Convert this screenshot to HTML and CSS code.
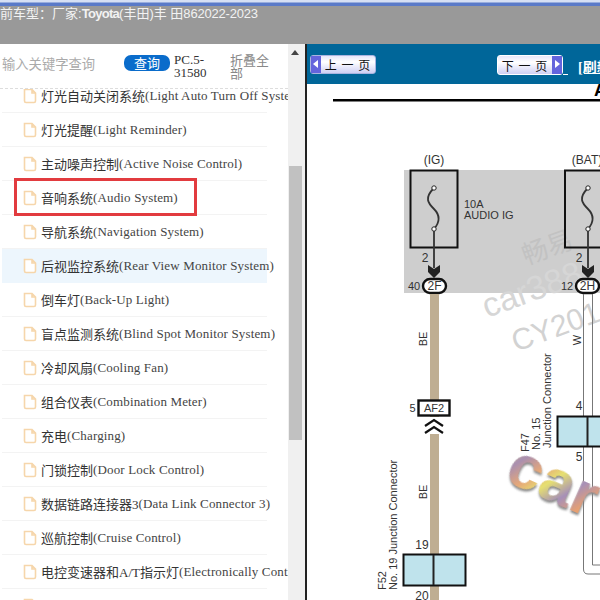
FILE: index.html
```html
<!DOCTYPE html>
<html lang="en">
<head>
    <meta charset="UTF-8">
    <title>Wiring Diagram</title>
    <link rel="stylesheet" href="styles.css">
</head>
<body>
    <svg class="defs" width="0" height="0">
        <symbol id="doc" viewBox="0 0 14 16">
            <path d="M1.5 1.5 H9 L12.5 5 V13 Q12.5 14.5 11 14.5 H3 Q1.5 14.5 1.5 13 Z M9 1.5 V5 H12.5" fill="#fff" stroke="#f6d6ab" stroke-width="1.6"/>
        </symbol>
        <linearGradient id="rainbow" x1="0" y1="0" x2="1" y2="0.5">
            <stop offset="0" stop-color="#e8d860"/>
            <stop offset="0.25" stop-color="#a98fb0"/>
            <stop offset="0.45" stop-color="#e6a878"/>
            <stop offset="0.6" stop-color="#e6e070"/>
            <stop offset="0.8" stop-color="#a690b8"/>
            <stop offset="1" stop-color="#e8a070"/>
        </linearGradient>
    </svg>

    <div class="stripe"></div>
    <div class="topbar">前车型：厂家:<b>Toyota</b>(丰田)丰 田<span class="years">862022-2023</span></div>

    <div class="main">
        <div class="sidebar">
            <div class="search">
                <span class="placeholder">输入关键字查询</span>
                <span class="query-btn">查询</span>
                <span class="pc-code">PC.5-31580</span>
                <span class="fold-all">折叠全部</span>
            </div>
            <div class="list-wrap">
                <ul class="list">
                    <li><svg class="doc"><use href="#doc"/></svg>灯光自动关闭系统<span>(Light Auto Turn Off System)</span></li>
                    <li><svg class="doc"><use href="#doc"/></svg>灯光提醒<span>(Light Reminder)</span></li>
                    <li><svg class="doc"><use href="#doc"/></svg>主动噪声控制<span>(Active Noise Control)</span></li>
                    <li><svg class="doc"><use href="#doc"/></svg>音响系统<span>(Audio System)</span><i class="marker"></i></li>
                    <li><svg class="doc"><use href="#doc"/></svg>导航系统<span>(Navigation System)</span></li>
                    <li class="hover"><svg class="doc"><use href="#doc"/></svg>后视监控系统<span>(Rear View Monitor System)</span></li>
                    <li><svg class="doc"><use href="#doc"/></svg>倒车灯<span>(Back-Up Light)</span></li>
                    <li><svg class="doc"><use href="#doc"/></svg>盲点监测系统<span>(Blind Spot Monitor System)</span></li>
                    <li><svg class="doc"><use href="#doc"/></svg>冷却风扇<span>(Cooling Fan)</span></li>
                    <li><svg class="doc"><use href="#doc"/></svg>组合仪表<span>(Combination Meter)</span></li>
                    <li><svg class="doc"><use href="#doc"/></svg>充电<span>(Charging)</span></li>
                    <li><svg class="doc"><use href="#doc"/></svg>门锁控制<span>(Door Lock Control)</span></li>
                    <li><svg class="doc"><use href="#doc"/></svg>数据链路连接器3<span>(Data Link Connector 3)</span></li>
                    <li><svg class="doc"><use href="#doc"/></svg>巡航控制<span>(Cruise Control)</span></li>
                    <li><svg class="doc"><use href="#doc"/></svg>电控变速器和A/T指示灯<span>(Electronically Controlled Transmission)</span></li>
                    <li><svg class="doc"><use href="#doc"/></svg>发动机控制<span>(Engine Control)</span></li>
                </ul>
            </div>
        </div>

        <div class="scrollbar">
            <div class="scroll-up"></div>
            <div class="scroll-thumb"></div>
        </div>

        <div class="viewer">
            <div class="viewer-head">
                <span class="page-btn"><i class="cap cap-left"></i><em>上 一 页</em></span>
                <span class="page-btn next"><em>下 一 页</em><i class="cap cap-right"></i></span>
                <span class="btn-tail"></span>
                <a class="refresh">[刷新]</a>
            </div>
            <svg class="diagram" width="293" height="516" viewBox="307 84 293 516">
                <text x="594" y="96" class="title">A</text>
                <rect x="333" y="99" width="267" height="2.5" fill="#000"/>

                <rect x="404" y="170" width="196" height="123" fill="#cecece"/>

                <!-- watermark -->
                <text class="mark" transform="translate(526 265) rotate(-20)">畅易</text>
                <text class="mark mark-lg" transform="translate(487 318) rotate(-20)">car388</text>
                <text class="mark mark-md" transform="translate(516 352) rotate(-20)">CY201</text>

                <!-- fuses -->
                <text x="434" y="164" class="lbl big mid">(IG)</text>
                <text x="587" y="164" class="lbl big mid">(BAT)</text>
                <rect x="410.5" y="170.5" width="47" height="77" class="box"/>
                <rect x="565" y="170.5" width="47" height="77" class="box"/>
                <path d="M434 188 C424 198 428 203 434 209 C440 215 440 222 434 229" class="thin"/>
                <path d="M588 188 C578 198 582 203 588 209 C594 215 594 222 588 229" class="thin"/>
                <circle cx="434" cy="188" r="2.2" fill="#fff" stroke="#222"/>
                <circle cx="434" cy="229" r="2.2" fill="#fff" stroke="#222"/>
                <circle cx="588" cy="188" r="2.2" fill="#fff" stroke="#222"/>
                <circle cx="588" cy="229" r="2.2" fill="#fff" stroke="#222"/>
                <text x="464" y="208" class="lbl">10A</text>
                <text x="464" y="219" class="lbl">AUDIO IG</text>

                <path d="M434 231 V268" class="thin"/>
                <path d="M588 231 V268" class="thin"/>
                <text x="425" y="262" class="lbl big mid">2</text>
                <text x="579" y="262" class="lbl big mid">2</text>
                <path d="M428 265 L434 269 L440 265 V272 L434 278 L428 272 Z" fill="#222"/>
                <path d="M582 265 L588 269 L594 265 V272 L588 278 L582 272 Z" fill="#222"/>
                <rect x="423" y="279" width="23" height="14" rx="7" class="pin"/>
                <rect x="576" y="279" width="23" height="14" rx="7" class="pin"/>
                <text x="434.5" y="290" class="lbl big mid">2F</text>
                <text x="587.5" y="290" class="lbl big mid">2H</text>
                <text x="414" y="290" class="lbl mid">40</text>
                <text x="567" y="290" class="lbl mid">12</text>

                <!-- left wire -->
                <rect x="430" y="294" width="9" height="306" class="tan"/>
                <rect x="418.5" y="400.5" width="31" height="15" class="pin"/>
                <text x="434" y="412" class="lbl mid">AF2</text>
                <text x="412.5" y="412" class="lbl mid">5</text>
                <rect x="420" y="417" width="28" height="17" fill="#fff"/>
                <path d="M425 426 L434 420 L443 426 M425 433 L434 427 L443 433" fill="none" stroke="#111" stroke-width="2.2"/>
                <text class="lbl mid" transform="translate(427 339) rotate(-90)">BE</text>
                <text class="lbl mid" transform="translate(427 492) rotate(-90)">BE</text>
                <rect x="403.5" y="554.5" width="62" height="31" class="conn"/>
                <path d="M433.5 555 V585" stroke="#222" stroke-width="2"/>
                <text x="422" y="549" class="lbl big mid">19</text>
                <text x="422" y="600" class="lbl big mid">20</text>
                <text class="lbl" transform="translate(397 590) rotate(-90)">No. 19 Junction Connector</text>
                <text class="lbl" transform="translate(386 590) rotate(-90)">F52</text>

                <!-- right wire -->
                <path d="M583.5 294 V416 M592.5 294 V416 M583.5 447 V569 Q583.5 574 588 574 H600 M592.5 447 V565 H600" class="wire"/>
                <text class="lbl mid" transform="translate(581 340) rotate(-90)">W</text>
                <rect x="557.5" y="416.5" width="60" height="30" class="conn"/>
                <path d="M587.5 417 V446" stroke="#222" stroke-width="2"/>
                <text x="579" y="410" class="lbl big mid">4</text>
                <text x="579" y="461" class="lbl big mid">5</text>
                <text class="lbl" transform="translate(551 448) rotate(-90)">Junction Connector</text>
                <text class="lbl" transform="translate(540 450) rotate(-90)">No. 15</text>
                <text class="lbl" transform="translate(529 452) rotate(-90)">F47</text>

                <!-- colored logo watermark -->
                <text class="logo" transform="translate(503 480) rotate(24)">car</text>
            </svg>
        </div>
    </div>
</body>
</html>
```

FILE: styles.css
```css
* {
    box-sizing: border-box;
}
html, body {
    margin: 0;
    height: 600px;
    overflow: hidden;
    background: #fff;
}
body {
    font-family: "Liberation Serif", "Noto Sans CJK SC", serif;
}
.defs {
    position: absolute;
}
.stripe {
    height: 6px;
    background: linear-gradient(#d6e0f4, #d6e0f4 2px, #5a7ac8 3px, #5a7ac8);
}
.topbar {
    height: 38px;
    background: #999;
    color: #f2f2f2;
    font-family: "Liberation Sans", "Noto Sans CJK SC", sans-serif;
    font-size: 13px;
    line-height: 15px;
    white-space: nowrap;
}
.topbar b {
    letter-spacing: -0.7px;
}
.years {
    letter-spacing: -0.2px;
}
.main {
    display: flex;
    height: 556px;
}

/* left tree */
.sidebar {
    width: 288px;
    overflow: hidden;
    flex-shrink: 0;
}
.search {
    height: 44px;
    display: flex;
    align-items: center;
    font-size: 14px;
    padding-left: 2px;
}
.placeholder {
    width: 122px;
    margin-top: -6px;
    color: #aaa;
    font-family: "Noto Sans CJK SC", sans-serif;
    font-size: 13.3px;
}
.query-btn {
    width: 46px;
    height: 16px;
    line-height: 15px;
    margin-top: -6px;
    background: #0a6ccb;
    color: #fff;
    border-radius: 7px;
    text-align: center;
    font-family: "Noto Sans CJK SC", sans-serif;
    font-size: 13px;
}
.pc-code {
    width: 56px;
    margin: -1px 0 0 4px;
    line-height: 13px;
    font-size: 13px;
    color: #333;
    word-break: break-word;
}
.fold-all {
    width: 40px;
    line-height: 13px;
    font-size: 13px;
    color: #888;
    font-family: "Noto Sans CJK SC", sans-serif;
}
.list-wrap {
    height: 512px;
    overflow: hidden;
    border-top: 1px dashed #ddd;
}
.list {
    list-style: none;
    margin: -10px 0 0;
    padding: 0 0 0 2px;
    width: 267px;
}
.list li {
    position: relative;
    height: 34px;
    display: flex;
    align-items: center;
    padding-left: 21px;
    border-bottom: 1px solid #f3f3f3;
    font-size: 13px;
    color: #333;
    white-space: nowrap;
}
.list li span {
    color: #444;
    letter-spacing: 0.15px;
}
.list li.hover {
    background: #edf6fd;
    border-bottom-color: #edf6fd;
}
.doc {
    width: 14px;
    height: 16px;
    margin-right: 4px;
    flex-shrink: 0;
}
.marker {
    position: absolute;
    left: 12px;
    top: 0;
    width: 183px;
    height: 38px;
    border: 3px solid #e23b3f;
    margin-top: -3px;
}

/* scrollbar */
.scrollbar {
    width: 17px;
    flex-shrink: 0;
    background: #f0f0f0;
    border-right: 2px solid #f0f0f0;
    position: relative;
}
.scroll-up {
    width: 0;
    margin: 6px 0 0 3px;
    border: 4px solid transparent;
    border-top: 0;
    border-bottom: 5px solid #444;
}
.scroll-thumb {
    position: absolute;
    top: 122px;
    left: 1px;
    width: 13px;
    height: 274px;
    background: #c1c1c1;
}

/* right side */
.viewer {
    width: 295px;
    flex-shrink: 0;
    border-left: 2px solid #222;
    overflow: hidden;
}
.viewer-head {
    height: 40px;
    background: #006699;
    display: flex;
    align-items: flex-start;
    padding: 11px 0 0 3px;
    white-space: nowrap;
    overflow: hidden;
}
.page-btn {
    width: 66px;
    height: 19px;
    flex-shrink: 0;
    display: flex;
    align-items: center;
    background: linear-gradient(#e6e6fa, #fff 35%, #cfd0f4);
    border: 1px solid #aab4e0;
    border-radius: 3px;
    font-family: "Noto Sans CJK SC", sans-serif;
    font-size: 12px;
    color: #111;
}
.page-btn em {
    flex: 1;
    font-style: normal;
    text-align: center;
    white-space: pre;
    letter-spacing: 1px;
}
.page-btn.next {
    margin-left: 121px;
    border-color: #fff;
    height: 20px;
}
.cap {
    width: 10px;
    height: 100%;
    background: #6464dc;
    position: relative;
}
.cap::after {
    content: "";
    position: absolute;
    top: 4px;
    border: 4px solid transparent;
}
.cap-left::after {
    left: -2px;
    border-right: 5px solid #fff;
}
.cap-right::after {
    left: 3px;
    border-left: 5px solid #fff;
}
.btn-tail {
    width: 5px;
    height: 20px;
    flex-shrink: 0;
    border-bottom: 1px solid #fff;
}
.refresh {
    margin: 1px 0 0 10px;
    flex-shrink: 0;
    color: #fff;
    font-family: "Liberation Serif", "Noto Sans CJK SC", serif;
    font-weight: bold;
    font-size: 14px;
    text-decoration: underline;
}
.diagram {
    display: block;
}

/* diagram parts */
.diagram text {
    font-family: "Liberation Sans", sans-serif;
}
.title {
    font-size: 18px;
    font-weight: bold;
}
.lbl {
    font-size: 11px;
    fill: #333;
}
.big {
    font-size: 12px;
}
.mid {
    text-anchor: middle;
}
.box {
    fill: none;
    stroke: #111;
    stroke-width: 2;
}
.thin {
    fill: none;
    stroke: #333;
    stroke-width: 1.8;
}
.pin {
    fill: #fff;
    stroke: #111;
    stroke-width: 2.4;
}
.tan {
    fill: #bfae92;
}
.conn {
    fill: #bfe3ec;
    stroke: #111;
    stroke-width: 2;
}
.wire {
    fill: none;
    stroke: #777;
    stroke-width: 1;
}
.diagram .mark {
    font-family: "Noto Sans CJK SC", sans-serif;
    font-size: 26px;
    fill: #c2c2c2;
}
.diagram .mark-lg {
    font-family: "Liberation Sans", sans-serif;
    font-size: 34px;
    fill: #d6d6d6;
}
.diagram .mark-md {
    font-family: "Liberation Sans", sans-serif;
    font-size: 30px;
    fill: #d2d2d2;
}
.diagram .logo {
    font-family: "Liberation Sans", sans-serif;
    font-size: 62px;
    font-weight: bold;
    fill: url(#rainbow);
    filter: drop-shadow(1px 2px 1px #888);
}
```
